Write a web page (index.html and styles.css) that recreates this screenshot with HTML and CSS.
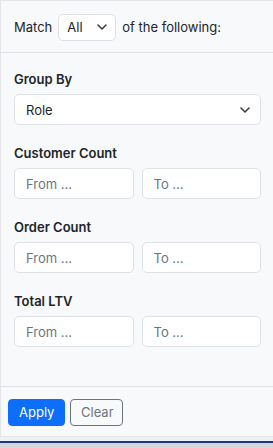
FILE: index.html
```html
<!DOCTYPE html>
<html lang="en">
<head>
  <meta charset="UTF-8" />
  <meta name="viewport" content="width=device-width, initial-scale=1.0" />
  <title>Filters</title>
  <link rel="stylesheet" href="styles.css">
</head>
<body>

  <div class="filter-panel">
    <div class="panel-header">
      <span>Match</span>
      <div class="select select-small">
        <span>All</span>
        <svg width="10" height="6" viewBox="0 0 10 6"><path d="M1 1l4 4 4-4" fill="none" stroke="#343a40" stroke-width="1.5" stroke-linecap="round" stroke-linejoin="round"/></svg>
      </div>
      <span>of the following:</span>
    </div>

    <div class="panel-body">
      <div class="field">
        <label>Group By</label>
        <div class="select">
          <span>Role</span>
          <svg width="10" height="6" viewBox="0 0 10 6"><path d="M1 1l4 4 4-4" fill="none" stroke="#343a40" stroke-width="1.5" stroke-linecap="round" stroke-linejoin="round"/></svg>
        </div>
      </div>

      <div class="field">
        <label>Customer Count</label>
        <div class="range">
          <input type="text" placeholder="From ..." />
          <input type="text" placeholder="To ..." />
        </div>
      </div>

      <div class="field">
        <label>Order Count</label>
        <div class="range">
          <input type="text" placeholder="From ..." />
          <input type="text" placeholder="To ..." />
        </div>
      </div>

      <div class="field">
        <label>Total LTV</label>
        <div class="range">
          <input type="text" placeholder="From ..." />
          <input type="text" placeholder="To ..." />
        </div>
      </div>
    </div>

    <div class="panel-footer">
      <button class="btn btn-primary">Apply</button>
      <button class="btn btn-outline">Clear</button>
    </div>
  </div>

  <div class="window-edge"></div>

</body>
</html>
```

FILE: styles.css
```css
* {
  box-sizing: border-box;
}

html, body {
  margin: 0;
  padding: 0;
  height: 100%;
}

body {
  font-family: Inter, 'Noto Sans', sans-serif;
  font-size: 13px;
  color: #212529;
  background: #d6d6d6;
  display: flex;
  flex-direction: column;
}

.filter-panel {
  height: 437px;
  flex-shrink: 0;
  background: #f8f9fa;
  border: 1px solid #e3e5e8;
  border-right: none;
  display: flex;
  flex-direction: column;
}

.panel-header {
  height: 52px;
  padding: 0 13px;
  display: flex;
  align-items: center;
  gap: 6px;
  border-bottom: 1px solid #dee2e6;
}

.select {
  height: 31px;
  background: white;
  border: 1px solid #dee2e6;
  border-radius: 5px;
  padding: 0 10px 0 11px;
  display: flex;
  align-items: center;
  justify-content: space-between;
}

.select-small {
  width: 58px;
  height: 27px;
  padding: 0 8px;
  margin-top: 1px;
}

.panel-body {
  flex: 1;
  padding: 17px 12px 0 13px;
  display: flex;
  flex-direction: column;
  gap: 19px;
}

.field label {
  display: block;
  font-weight: 600;
  line-height: 19px;
  margin-bottom: 5px;
}

.range {
  display: flex;
  gap: 8px;
}

.range input {
  flex: 1;
  min-width: 0;
  height: 31px;
  border: 1px solid #dee2e6;
  border-radius: 5px;
  background: white;
  padding: 0 11px;
  font-family: inherit;
  font-size: 13px;
  color: #212529;
}

.range input::placeholder {
  color: #6c757d;
}

.panel-footer {
  height: 50px;
  border-top: 1px solid #dee2e6;
  padding: 1px 7px 0;
  display: flex;
  align-items: center;
  gap: 5px;
}

.btn {
  height: 27px;
  border-radius: 4px;
  font-family: inherit;
  font-size: 13px;
  padding: 0 10px;
  cursor: pointer;
}

.btn-primary {
  background: #0d6efd;
  border: 1px solid #0d6efd;
  color: white;
  width: 57px;
}

.btn-outline {
  background: transparent;
  border: 1px solid #6c757d;
  color: #6c757d;
  width: 53px;
}

.window-edge {
  height: 6px;
  flex-shrink: 0;
  background: #f0f0f0;
  border-bottom: 2px solid #1f3193;
}
```
